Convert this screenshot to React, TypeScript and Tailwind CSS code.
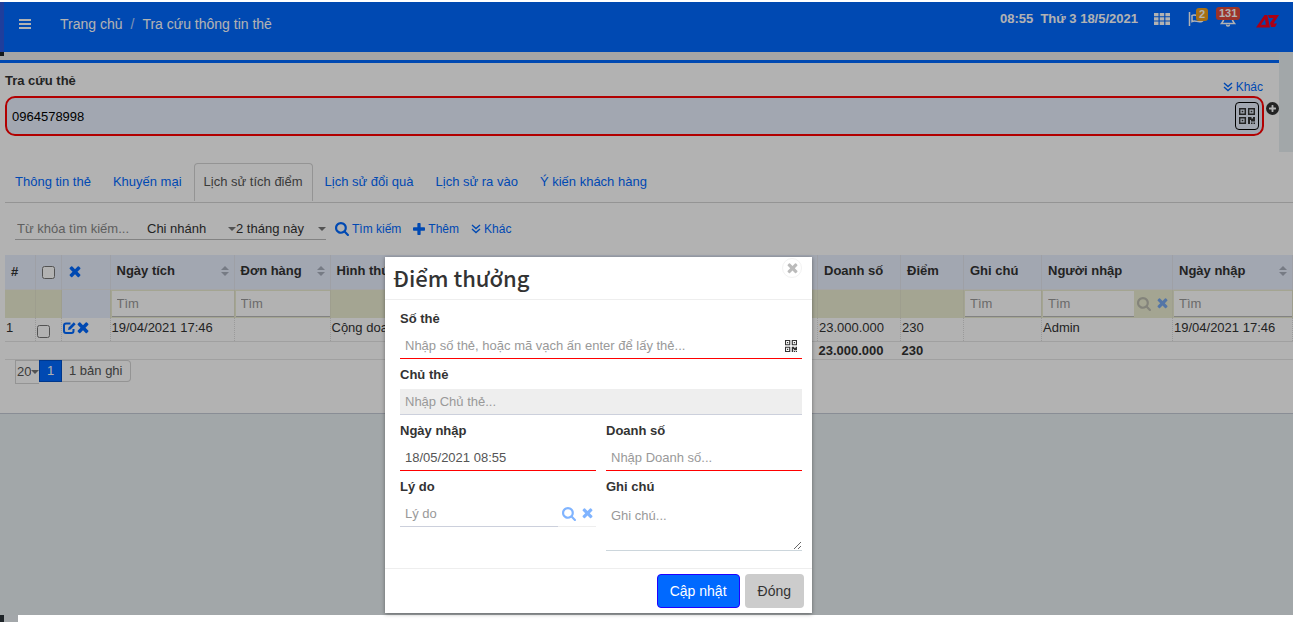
import React from 'react';
import type { ReactNode } from 'react';
import clsx from 'clsx';

interface IconProps {
  className?: string;
}

const TimesIcon = ({ className }: IconProps) => (
  <svg viewBox="240 330 1310 1310" fill="currentColor" className={className} aria-hidden="true">
    <path d="M1490 1322q0 40-28 68l-136 136q-28 28-68 28t-68-28l-294-294-294 294q-28 28-68 28t-68-28l-136-136q-28-28-28-68t28-68l294-294-294-294q-28-28-28-68t28-68l136-136q28-28 68-28t68 28l294 294 294-294q28-28 68-28t68 28l136 136q28 28 28 68t-28 68l-294 294 294 294q28 28 28 68z" />
  </svg>
);

const SearchIcon = ({ className }: IconProps) => (
  <svg viewBox="64 128 1664 1664" fill="currentColor" className={className} aria-hidden="true">
    <path d="M1216 832q0-185-131.5-316.5t-316.5-131.5-316.5 131.5-131.5 316.5 131.5 316.5 316.5 131.5 316.5-131.5 131.5-316.5zm512 832q0 52-38 90t-90 38q-54 0-90-38l-343-342q-179 124-399 124-143 0-273.5-55.5t-225-150-150-225-55.5-273.5 55.5-273.5 150-225 225-150 273.5-55.5 273.5 55.5 225 150 150 225 55.5 273.5q0 220-124 399l343 343q37 37 37 90z" />
  </svg>
);

const PlusIcon = ({ className }: IconProps) => (
  <svg viewBox="192 128 1408 1408" fill="currentColor" className={className} aria-hidden="true">
    <path d="M1600 736v192q0 40-28 68t-68 28h-416v416q0 40-28 68t-68 28h-192q-40 0-68-28t-28-68v-416h-416q-40 0-68-28t-28-68v-192q0-40 28-68t68-28h416v-416q0-40 28-68t68-28h192q40 0 68 28t28 68v416h416q40 0 68 28t28 68z" />
  </svg>
);

const DoubleDownIcon = ({ className }: IconProps) => (
  <svg viewBox="0 0 10 10" fill="none" stroke="currentColor" strokeWidth="1.4" className={className} aria-hidden="true">
    <path d="M1 1l4 3.5L9 1M1 5l4 3.5L9 5" />
  </svg>
);

const QrIcon = ({ className }: IconProps) => (
  <svg viewBox="0 0 16 16" fill="none" stroke="currentColor" strokeWidth="1.5" className={className} aria-hidden="true">
    <path d="M.7.7h5.6v5.6H.7zM9.7.7h5.6v5.6H9.7zM.7 9.7h5.6v5.6H.7z" />
    <path
      d="M2.7 2.7h1.6v1.6H2.7zM11.7 2.7h1.6v1.6h-1.6zM2.7 11.7h1.6v1.6H2.7zM9 9h3.5v1.5H14V9h2v4.5h-4V12h-1v4H9zM12 14.500h1.500V16H12zM14.500 14.500H16V16h-1.500z"
      fill="currentColor"
      stroke="none"
    />
  </svg>
);

const EditIcon = ({ className }: IconProps) => (
  <svg viewBox="0 0 13 12" fill="none" stroke="currentColor" strokeWidth="2" className={className} aria-hidden="true">
    <path d="M7.500 1.500H3Q1 1.500 1 3.500V9Q1 11 3 11h5.500q2 0 2-2V7" />
    <path d="M5 8l.6-2.500L10.800.3l1.900 1.900L7.500 7.400z" fill="currentColor" stroke="none" />
  </svg>
);

const SortIcon = () => (
  <svg viewBox="0 0 8 10" className="h-[10px] w-2 shrink-0 text-[#aab0bd]" fill="currentColor" aria-hidden="true">
    <path d="M4 0l4 4H0zM4 10l4-4H0z" />
  </svg>
);

const MenuIcon = ({ className }: IconProps) => (
  <svg viewBox="0 0 12 10" fill="currentColor" className={className} aria-hidden="true">
    <path d="M0 0h12v2H0zM0 4h12v2H0zM0 8h12v2H0z" />
  </svg>
);

const GridIcon = ({ className }: IconProps) => (
  <svg viewBox="0 0 16 12" fill="currentColor" className={className} aria-hidden="true">
    <path d="M0 0h4.500v3.300H0zM5.700 0h4.500v3.300H5.700zM11.400 0H16v3.300h-4.600zM0 4.300h4.500v3.300H0zM5.700 4.300h4.500v3.300H5.700zM11.400 4.300H16v3.300h-4.600zM0 8.600h4.500V12H0zM5.700 8.600h4.500V12H5.700zM11.400 8.600H16V12h-4.600z" />
  </svg>
);

const FlagIcon = ({ className }: IconProps) => (
  <svg viewBox="0 0 16 14" fill="none" stroke="currentColor" strokeWidth="1.500" className={className} aria-hidden="true">
    <path d="M1.500 0v14M4 3.500c3-2 5 1.500 10.500-.5v6C10 11.500 8 7.500 4 9.500z" />
  </svg>
);

const BellIcon = ({ className }: IconProps) => (
  <svg viewBox="0 0 16 16" fill="none" stroke="currentColor" strokeWidth="1.500" className={className} aria-hidden="true">
    <path d="M1.500 12.500C3.500 10.500 4 9 4 6c0-2.500 2-4 4-4s4 1.500 4 4c0 3 .5 4.500 2.500 6.500z" />
    <path d="M6.500 13.500a1.500 1.500 0 0 0 3 0" />
  </svg>
);

const Logo = () => (
  <svg viewBox="0 0 23 14" className="h-[14px] w-[23px]" fill="#f5001d" aria-hidden="true">
    <path d="M0 13.500L8.500 1h2.800L14 13.500zM5 10.800h4.800L9 5z" fillRule="evenodd" />
    <path d="M12 1h11l-5.500 8.500H21l-2 3.500h-4l-1-4 3.500-5H13z" />
  </svg>
);

const tabs = [
  'Thông tin thẻ',
  'Khuyến mại',
  'Lịch sử tích điểm',
  'Lịch sử đổi quà',
  'Lịch sử ra vào',
  'Ý kiến khách hàng',
];

interface Column {
  title: string;
  width: string;
  sortable?: boolean;
  filter?: boolean;
  lookup?: boolean;
  value: string;
  total?: string;
}

const columns: Column[] = [
  { title: 'Ngày tích', width: 'w-[124px]', sortable: true, filter: true, value: '19/04/2021 17:46' },
  { title: 'Đơn hàng', width: 'w-[96px]', sortable: true, filter: true, value: '' },
  { title: 'Hình thức', width: 'w-auto', value: 'Cộng doanh số' },
  { title: 'Doanh số', width: 'w-[83px]', value: '23.000.000', total: '23.000.000' },
  { title: 'Điểm', width: 'w-[63px]', value: '230', total: '230' },
  { title: 'Ghi chú', width: 'w-[78px]', filter: true, value: '' },
  { title: 'Người nhập', width: 'w-[131px]', filter: true, lookup: true, value: 'Admin' },
  { title: 'Ngày nhập', width: 'w-[120px]', sortable: true, filter: true, value: '19/04/2021 17:46' },
];

const Header = () => (
  <header className="flex h-[50px] items-start justify-between border-l-4 border-[#2d5ae0] bg-[#0069ff] pr-[14px] text-sm text-white">
    <div className="flex items-center pt-3">
      <button type="button" aria-label="Menu" className="mr-[29px] ml-[15px]">
        <MenuIcon className="h-[10px] w-3" />
      </button>
      <nav className="flex gap-2">
        <a href="#home">Trang chủ</a>
        <span className="opacity-70">/</span>
        <a href="#card">Tra cứu thông tin thẻ</a>
      </nav>
    </div>
    <div className="flex items-center pt-2">
      <span className="mr-4 text-[13px] font-bold">08:55&nbsp; Thứ 3 18/5/2021</span>
      <button type="button" aria-label="Ứng dụng" className="mr-[18px]">
        <GridIcon className="h-3 w-4" />
      </button>
      <button type="button" aria-label="Công việc" className="relative mr-4">
        <FlagIcon className="h-[14px] w-4" />
        <span className="absolute -top-1 left-2 rounded-[3px] bg-[#f0a01c] px-[3px] text-[11px] leading-[13px] font-bold">2</span>
      </button>
      <button type="button" aria-label="Thông báo" className="relative mr-5">
        <BellIcon className="h-4 w-4" />
        <span className="absolute -top-1 -left-1 rounded-[3px] bg-[#e0493b] px-[3px] text-[11px] leading-[13px] font-bold">131</span>
      </button>
      <a href="#account" aria-label="Tài khoản" className="pt-1">
        <Logo />
      </a>
    </div>
  </header>
);

const CardLookup = () => (
  <section className="relative mr-[14px] border-t-8 border-[#ededed] bg-white">
    <div className="absolute -top-2 left-0 h-1 w-1 bg-[#1e2428]" />
    <div className="h-[92px] border-t-[3px] border-[#0069ff] pt-2 pl-[5px]">
      <div className="flex items-end justify-between pr-4">
        <label htmlFor="card-code" className="pb-[5px] leading-5 font-bold">Tra cứu thẻ</label>
        <a href="#more" className="flex items-center gap-[3px] text-xs leading-[18px] text-[#0069ff]">
          <DoubleDownIcon className="h-[10px] w-[10px]" />
          Khác
        </a>
      </div>
      <div className="flex items-start">
        <div className="flex h-10 flex-1 items-center rounded-[10px] border-2 border-[#ff0000] bg-[#e8f0fe] pr-[3px]">
          <input id="card-code" defaultValue="0964578998" className="h-full min-w-0 flex-1 px-[5px] text-black outline-none" />
          <button type="button" aria-label="Quét mã" className="flex h-7 w-6 items-center justify-center rounded border border-black">
            <QrIcon className="h-4 w-4" />
          </button>
        </div>
        <button type="button" aria-label="Thêm thẻ" className="mt-[6px] ml-[2px] flex h-[13px] w-[13px] items-center justify-center rounded-full bg-[#333]">
          <PlusIcon className="h-[7px] w-[7px] text-white" />
        </button>
      </div>
    </div>
  </section>
);

const SelectBox = ({ label, value, className }: { label: string; value: string; className: string }) => (
  <div className={clsx('flex items-center', className)}>
    <select aria-label={label} className="h-full min-w-0 flex-1 appearance-none outline-none">
      <option>{value}</option>
    </select>
    <svg viewBox="0 0 8 4" className="h-1 w-2 shrink-0 text-[#777]" fill="currentColor" aria-hidden="true">
      <path d="M0 0h8L4 4z" />
    </svg>
  </div>
);

const Toolbar = () => (
  <div className="flex h-[52px] items-center pl-[10px]">
    <div className="flex h-[22px] w-[311px] border-b border-[#bbb]">
      <input aria-label="Từ khóa" placeholder="Từ khóa tìm kiếm..." className="w-[132px] px-[2px] outline-none placeholder:text-[#888]" />
      <SelectBox label="Chi nhánh" value="Chi nhánh" className="w-[89px]" />
      <SelectBox label="Thời gian" value="2 tháng này" className="flex-1" />
    </div>
    <div className="flex items-center gap-3 pl-[9px] text-xs text-[#0069ff]">
      <button type="button" className="flex items-center gap-[3px]">
        <SearchIcon className="h-[14px] w-[14px]" />
        Tìm kiếm
      </button>
      <button type="button" className="flex items-center gap-[3px]">
        <PlusIcon className="h-3 w-3" />
        Thêm
      </button>
      <button type="button" className="flex items-center gap-[3px]">
        <DoubleDownIcon className="h-[10px] w-[10px]" />
        Khác
      </button>
    </div>
  </div>
);

const HistoryTable = () => (
  <table className="w-full table-fixed border-collapse text-left text-[#333]">
    <thead>
      <tr className="h-[34px] bg-[#e8effe]">
        <th className="w-[30px] border-r border-[#e2e6ee] pl-[6px]">#</th>
        <th className="w-[26px] border-r border-[#e2e6ee] pl-[6px]">
          <input type="checkbox" aria-label="Chọn tất cả" className="mt-[2px] block h-[13px] w-[13px]" />
        </th>
        <th className="w-[49px] border-r border-[#e2e6ee] pl-[7px]">
          <button type="button" aria-label="Xóa đã chọn" className="flex text-[#0069ff]">
            <TimesIcon className="h-3 w-3" />
          </button>
        </th>
        {columns.map(column => (
          <th key={column.title} className={clsx('border-r border-[#e2e6ee] pr-[5px] pl-[6px] whitespace-nowrap', column.width)}>
            <div className="flex items-center justify-between pb-[2px]">
              {column.title}
              {column.sortable && <SortIcon />}
            </div>
          </th>
        ))}
      </tr>
    </thead>
    <tbody>
      <tr className="h-[29px] border-t border-[#ededed] bg-[#ebecd1]">
        <td className="border-r border-[#e2e3cc]" />
        <td className="border-r border-[#e2e3cc]" />
        <td className="border-r border-[#e2e3cc] bg-[#e8effe]" />
        {columns.map(column => (
          <td key={column.title} className="border-r border-[#e2e3cc] p-0">
            {column.filter && (
              <div className="flex items-center">
                <input
                  aria-label={`Tìm ${column.title}`}
                  placeholder="Tìm"
                  className="ml-px h-[26px] min-w-0 flex-1 border-b border-[#bbb] bg-white px-[5px] outline-none placeholder:text-[#999]"
                />
                {column.lookup && (
                  <div className="flex items-center gap-[6px] pr-1 pl-[3px]">
                    <SearchIcon className="h-[14px] w-[14px] text-[#bcbcb0]" />
                    <TimesIcon className="h-[11px] w-[11px] text-[#77a8ee]" />
                  </div>
                )}
              </div>
            )}
          </td>
        ))}
      </tr>
      <tr className="h-[23px] border-b border-[#e6e6e6]">
        <td className="border-r border-dotted border-[#ddd] pl-px align-top">1</td>
        <td className="border-r border-dotted border-[#ddd] pl-px">
          <input type="checkbox" aria-label="Chọn dòng 1" className="mt-1 block h-[13px] w-[13px]" />
        </td>
        <td className="border-r border-dotted border-[#ddd] pl-px align-top">
          <div className="flex items-center gap-px pt-1 text-[#0069ff]">
            <button type="button" aria-label="Sửa">
              <EditIcon className="block h-3 w-[13px]" />
            </button>
            <button type="button" aria-label="Xóa">
              <TimesIcon className="block h-3 w-3" />
            </button>
          </div>
        </td>
        {columns.map(column => (
          <td key={column.title} className="border-r border-dotted border-[#ddd] pl-px align-top whitespace-nowrap">
            {column.value}
          </td>
        ))}
      </tr>
      <tr className="h-[18px] border-b border-[#e6e6e6] leading-[17px] font-bold">
        <td colSpan={3} />
        {columns.map(column => (
          <td key={column.title} className="pl-px">{column.total}</td>
        ))}
      </tr>
    </tbody>
  </table>
);

const HistoryCard = () => (
  <section className="h-[262px] border-b border-[#c4cbd6] bg-white pl-[5px]">
    <ul className="mt-[11px] flex h-[40px] border-b border-[#d4d4d4] text-[#0069ff]">
      {tabs.map((tab, index) => (
        <li
          key={tab}
          className={clsx(
            'mr-[2px] h-[38px] rounded-t border border-b-0 px-[9px] leading-[35px]',
            index === 2 ? 'border-[#d4d4d4] text-[#555]' : 'border-transparent'
          )}
        >
          <a href={`#tab-${index + 1}`}>{tab}</a>
        </li>
      ))}
    </ul>
    <Toolbar />
    <HistoryTable />
    <div className="flex items-start pl-[10px] text-[#555]">
      <SelectBox label="Số dòng" value="20" className="h-6 w-6 border border-r-0 border-[#d4d4d4] pl-px" />
      <button type="button" className="h-[22px] w-[23px] border border-[#0050c8] bg-[#0069ff] text-white">1</button>
      <span className="h-[22px] rounded-r border border-l-0 border-[#d4d4d4] px-[7px] leading-5">1 bản ghi</span>
    </div>
  </section>
);

interface FieldProps {
  id: string;
  label: string;
  className?: string;
  children: ReactNode;
}

const Field = ({ id, label, className, children }: FieldProps) => (
  <div className={clsx('flex flex-col', className)}>
    <label htmlFor={id} className="h-[25px] leading-[22px] font-bold text-[#333]">{label}</label>
    {children}
  </div>
);

const inputClass = 'h-[26px] w-full border-b px-[5px] text-[#555] outline-none placeholder:text-[#999]';

const PointDialog = () => (
  <div role="dialog" aria-labelledby="dialog-title" className="w-[427px] bg-white shadow-[0_1px_4px_rgba(0,0,0,0.4)]">
    <div className="flex h-[43px] items-start justify-between border-b border-[#eee] pr-[10px] pl-2">
      <h2 id="dialog-title" className="font-['Noto_Sans_CJK_SC',sans-serif] text-[22px] leading-10 font-medium text-[#333]">Điểm thưởng</h2>
      <button type="button" aria-label="Đóng hộp thoại" className="mt-px flex h-5 w-5 items-center justify-center rounded-full border border-[#f2f2f2] text-[#bbb]">
        <TimesIcon className="h-[11px] w-[11px]" />
      </button>
    </div>
    <form className="grid grid-cols-2 gap-x-[10px] gap-y-[5px] pt-2 pr-[10px] pb-[17px] pl-[15px]">
      <Field id="card-number" label="Số thẻ" className="col-span-2">
        <div className="flex h-[26px] items-center border-b border-[#ff0000] pr-[5px]">
          <input id="card-number" placeholder="Nhập số thẻ, hoặc mã vạch ấn enter để lấy thẻ..." className="min-w-0 flex-1 px-[5px] outline-none placeholder:text-[#999]" />
          <button type="button" aria-label="Quét mã thẻ">
            <QrIcon className="block h-3 w-3 text-[#333]" />
          </button>
        </div>
      </Field>
      <Field id="card-owner" label="Chủ thẻ" className="col-span-2">
        <input id="card-owner" readOnly placeholder="Nhập Chủ thẻ..." className={clsx(inputClass, 'border-[#ccd0dc] bg-[#eee]')} />
      </Field>
      <Field id="entry-date" label="Ngày nhập">
        <input id="entry-date" defaultValue="18/05/2021 08:55" className={clsx(inputClass, 'border-[#ff0000]')} />
      </Field>
      <Field id="revenue" label="Doanh số">
        <input id="revenue" placeholder="Nhập Doanh số..." className={clsx(inputClass, 'border-[#ff0000]')} />
      </Field>
      <Field id="reason" label="Lý do">
        <div className="flex">
          <input id="reason" placeholder="Lý do" className={clsx(inputClass, 'min-w-0 flex-1 border-[#ccd0dc]')} />
          <div className="flex w-[38px] items-center gap-[6px] border-b border-[#eee] pl-1 text-[#80b4ff]">
            <button type="button" aria-label="Tìm lý do">
              <SearchIcon className="block h-[14px] w-[14px]" />
            </button>
            <button type="button" aria-label="Xóa lý do">
              <TimesIcon className="block h-[11px] w-[11px]" />
            </button>
          </div>
        </div>
      </Field>
      <Field id="note" label="Ghi chú">
        <textarea id="note" placeholder="Ghi chú..." className="block h-[50px] w-full resize border-b border-[#ccd6dc] px-[5px] pt-[5px] outline-none placeholder:text-[#999]" />
      </Field>
    </form>
    <div className="flex justify-end gap-[5px] border-t border-[#eee] pt-[5px] pr-2 pb-[5px] text-sm">
      <button type="button" className="h-[34px] rounded-sm border border-[#2000ff] bg-[#0069ff] px-3 text-white">Cập nhật</button>
      <button type="button" className="h-[34px] rounded-sm bg-[#ccc] px-[13px] text-[#333]">Đóng</button>
    </div>
  </div>
);

const App = () => {
  return (
    <div className="flex min-h-screen flex-col bg-white pt-[2px] font-['Liberation_Sans',Arial,sans-serif] text-[13px] leading-5 text-[#333]">
      <div className="relative flex flex-1 flex-col bg-[#e9eff3]">
        <Header />
        <CardLookup />
        <HistoryCard />
        <div className="absolute inset-0 flex items-start bg-black/30 pt-[255px] pl-[385px]">
          <PointDialog />
        </div>
      </div>
      <div className="flex h-[7px]">
        <div className="w-1 bg-[#1e2428]" />
        <div className="w-[14px] bg-[#a3a7aa]" />
      </div>
    </div>
  );
};

export default App;
